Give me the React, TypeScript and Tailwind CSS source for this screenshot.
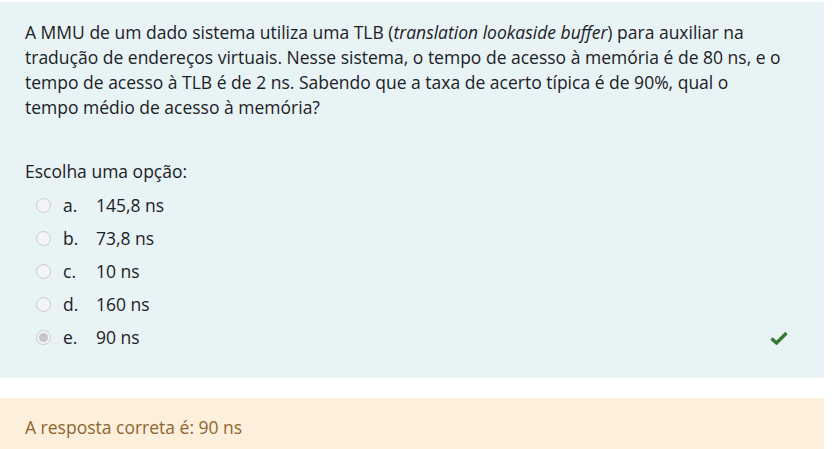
import React from "react";

const options = [
  { l: "a.", v: "145,8 ns" },
  { l: "b.", v: "73,8 ns" },
  { l: "c.", v: "10 ns" },
  { l: "d.", v: "160 ns" },
  { l: "e.", v: "90 ns", checked: true },
];

export default function App() {
  return (
    <div
      className="w-[834px] h-[449px] bg-white overflow-hidden pt-[2px] text-[#1d2125]"
      style={{ fontFamily: '"Segoe UI", "Open Sans", "Liberation Sans", sans-serif' }}
    >
      <div className="w-[824px] bg-[#e7f3f5] px-[25px] pt-[18px] pb-[24px]">
        <p className="text-[17.5px] leading-[25px] whitespace-nowrap">
          A MMU de um dado sistema utiliza uma TLB (<em>translation lookaside buffer</em>) para auxiliar na
          <br />
          tradução de endereços virtuais. Nesse sistema, o tempo de acesso à memória é de 80 ns, e o
          <br />
          tempo de acesso à TLB é de 2 ns. Sabendo que a taxa de acerto típica é de 90%, qual o
          <br />
          tempo médio de acesso à memória?
        </p>
        <div className="mt-[39px] text-[17.5px] leading-[25px]">Escolha uma opção:</div>
        <div className="mt-[5px] flex flex-col">
          {options.map((o) => (
            <div key={o.l} className="flex items-center h-[33px] text-[17.5px]">
              <span className="ml-[11px] w-[15px] h-[15px] rounded-full border-[1.5px] border-[#c9cbcd] bg-[#f3f4f5] flex items-center justify-center">
                {o.checked && <span className="w-[9px] h-[9px] rounded-full bg-[#c4c6c8]" />}
              </span>
              <span className="ml-[12px] w-[33px]">{o.l}</span>
              <span>{o.v}</span>
              {o.checked && (
                <svg className="ml-auto mr-[11px]" width="18" height="14" viewBox="0 0 18 14">
                  <path d="M1.5 7.5 L6.5 12 L16.5 2" fill="none" stroke="#357a32" strokeWidth="3.4" />
                </svg>
              )}
            </div>
          ))}
        </div>
      </div>
      <div className="mt-[20px] w-[824px] h-[60px] bg-[#fcefdc] px-[25px] pt-[17px] text-[17.5px] leading-[25px] text-[#8e662e]">
        A resposta correta é: 90 ns
      </div>
    </div>
  );
}
